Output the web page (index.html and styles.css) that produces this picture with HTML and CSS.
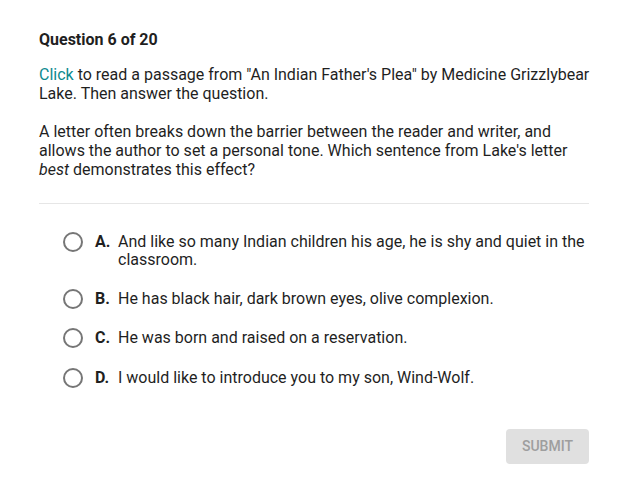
FILE: index.html
```html
<!DOCTYPE html>
<html>
<head>
<meta charset="utf-8">
<link rel="stylesheet" href="styles.css">
</head>
<body>
<div class="quiz">
  <h1 class="title">Question 6 of 20</h1>
  <p class="para"><a class="link">Click</a> to read a passage from "An Indian Father's Plea" by Medicine Grizzlybear Lake. Then answer the question.</p>
  <p class="para">A letter often breaks down the barrier between the reader and writer, and allows the author to set a personal tone. Which sentence from Lake's letter <em>best</em> demonstrates this effect?</p>
  <hr class="divider">
  <ul class="options">
    <li class="option"><span class="radio"></span><span class="letter">A.</span><span class="text">And like so many Indian children his age, he is shy and quiet in the classroom.</span></li>
    <li class="option"><span class="radio"></span><span class="letter">B.</span><span class="text">He has black hair, dark brown eyes, olive complexion.</span></li>
    <li class="option"><span class="radio"></span><span class="letter">C.</span><span class="text">He was born and raised on a reservation.</span></li>
    <li class="option"><span class="radio"></span><span class="letter">D.</span><span class="text">I would like to introduce you to my son, Wind-Wolf.</span></li>
  </ul>
  <div class="actions"><button class="submit">SUBMIT</button></div>
</div>
</body>
</html>
```
FILE: styles.css
```css
html, body { margin: 0; padding: 0; background: #fff; }
body { font-family: Roboto, "Noto Sans", sans-serif; color: #1f1f1f; }
.quiz { width: 553px; padding: 30px 0 0 39px; }
.title { margin: 0; font-size: 16px; font-weight: 700; line-height: 19px; }
.para { margin: 16px 0 19px; font-size: 16px; line-height: 19px; }
.para + .para { margin-top: 0; }
.link { color: #0c8a8f; text-decoration: none; }
.divider { margin: 24px 3px 0 0; border: 0; border-top: 1px solid #e6e6e6; }
.options { list-style: none; margin: 28px 0 0; padding: 0 0 0 23px; }
.option { display: flex; align-items: flex-start; font-size: 16px; line-height: 18px; margin-bottom: 19.5px; min-height: 20px; }
.option:last-child { margin-bottom: 0; }
.radio { flex: none; width: 16px; height: 16px; border: 2px solid #767676; border-radius: 50%; margin: 0 13px 0 1px; }
.letter { flex: none; font-weight: 700; width: 23px; padding-top: 1px; margin-left: -1px; }
.text { flex: 1; padding-top: 1px; }
.actions { display: flex; justify-content: flex-end; margin: 41px 3px 0 0; }
.submit { font-family: Roboto, sans-serif; font-size: 14px; font-weight: 500; color: #9e9e9e; background: #e0e0e0; border: 0; border-radius: 4px; width: 83px; height: 35px; padding: 0; }
```
